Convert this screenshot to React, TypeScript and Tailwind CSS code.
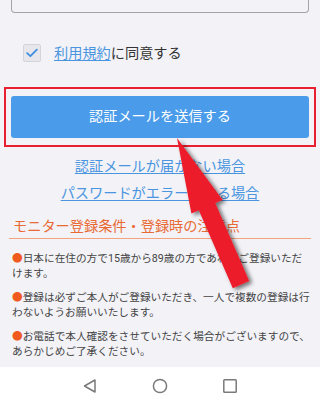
import React from 'react'

const notes = [
  ['日本に在住の方で15歳から89歳の方であればご登録いただ', 'けます。'],
  ['登録は必ずご本人がご登録いただき、一人で複数の登録は行', 'わないようお願いいたします。'],
  ['お電話で本人確認をさせていただく場合がございますので、', 'あらかじめご了承ください。'],
]

function Arrow() {
  // overlay pointer, drawn over the page
  return (
    <svg className="absolute inset-0 pointer-events-none" width="320" height="404" viewBox="0 0 320 404">
      <defs>
        <filter id="sh" x="-30%" y="-30%" width="160%" height="160%">
          <feDropShadow dx="3" dy="2" stdDeviation="2" floodColor="#000" floodOpacity="0.55" />
        </filter>
      </defs>
      <polygon
        filter="url(#sh)"
        fill="#ec1c2a"
        points="177,138 222.6,199.9 215.2,203.1 249.2,281 232.8,288.2 198.8,210.3 191.4,213.5"
      />
    </svg>
  )
}

export default function App() {
  return (
    <div
      className="relative w-[320px] h-[404px] overflow-hidden bg-[#f2f2f7] flex flex-col text-[#444]"
      style={{ fontFamily: 'Roboto, "Noto Sans CJK JP", sans-serif' }}
    >
      {/* bottom of the input above */}
      <div className="h-[13px] mx-[11px] border border-t-0 border-[#a3a3a8] rounded-b-[4px]" />

      {/* 同意 */}
      <div className="mt-[30px] flex items-center pl-[23px] gap-[13px]">
        <div className="w-[18px] h-[18px] rounded-[2px] bg-[#e6e6eb] border border-[#d4d4d9] flex items-center justify-center">
          <svg width="12" height="10" viewBox="0 0 12 10" fill="none">
            <path d="M1.2 5.2 L4.4 8.2 L10.8 1.6" stroke="#3f8fe0" strokeWidth="1.8" strokeLinecap="round" strokeLinejoin="round" />
          </svg>
        </div>
        <span className="text-[14.2px] leading-[20px] text-[#333]">
          <span className="text-[#4a95e0] underline underline-offset-[2px]">利用規約</span>に同意する
        </span>
      </div>

      {/* 送信 */}
      <div className="mt-[24px] mx-[4px] border-2 border-[#e8202f] px-[5px] py-[7px]">
        <button
          type="button"
          className="w-full h-[42px] rounded-[3px] bg-[#4a9be9] text-white text-[14.2px] flex items-center justify-center"
        >
          認証メールを送信する
        </button>
      </div>

      <div className="mt-[6px] flex flex-col items-center text-[14.2px] text-[#4a95e0]">
        <a className="h-[27px] flex items-center underline underline-offset-[2px]">認証メールが届かない場合</a>
        <a className="h-[27px] flex items-center underline underline-offset-[2px]">パスワードがエラーになる場合</a>
      </div>

      {/* 注意点 */}
      <div className="mt-[9px] mx-[9px] pl-[4px] pb-[2px] border-b-[1.5px] border-[#f4a37f] text-[14.2px] leading-[20px] text-[#e96a34]">
        モニター登録条件・登録時の注意点
      </div>

      <div className="mt-[12px] pl-[12px] pr-[8px] flex flex-col gap-[9px] text-[10.67px] leading-[15px] text-[#444] whitespace-nowrap">
        {notes.map(([a, b], i) => (
          <p key={i}>
            <span className="text-[#f05a1e]">●</span>
            {a}
            <br />
            {b}
          </p>
        ))}
      </div>

      {/* nav bar */}
      <div className="mt-auto h-[37px] bg-white flex items-center justify-center gap-[54px]">
        <svg width="16" height="16" viewBox="0 0 16 16" fill="none">
          <path d="M13 2 L13 14 L2.5 8 Z" stroke="#7a7a7a" strokeWidth="1.5" strokeLinejoin="round" />
        </svg>
        <svg width="16" height="16" viewBox="0 0 16 16" fill="none">
          <circle cx="8" cy="8" r="6.6" stroke="#7a7a7a" strokeWidth="1.5" />
        </svg>
        <svg width="16" height="16" viewBox="0 0 16 16" fill="none">
          <rect x="1.8" y="1.8" width="12.4" height="12.4" rx="0.8" stroke="#7a7a7a" strokeWidth="1.5" />
        </svg>
      </div>

      <Arrow />
    </div>
  )
}
